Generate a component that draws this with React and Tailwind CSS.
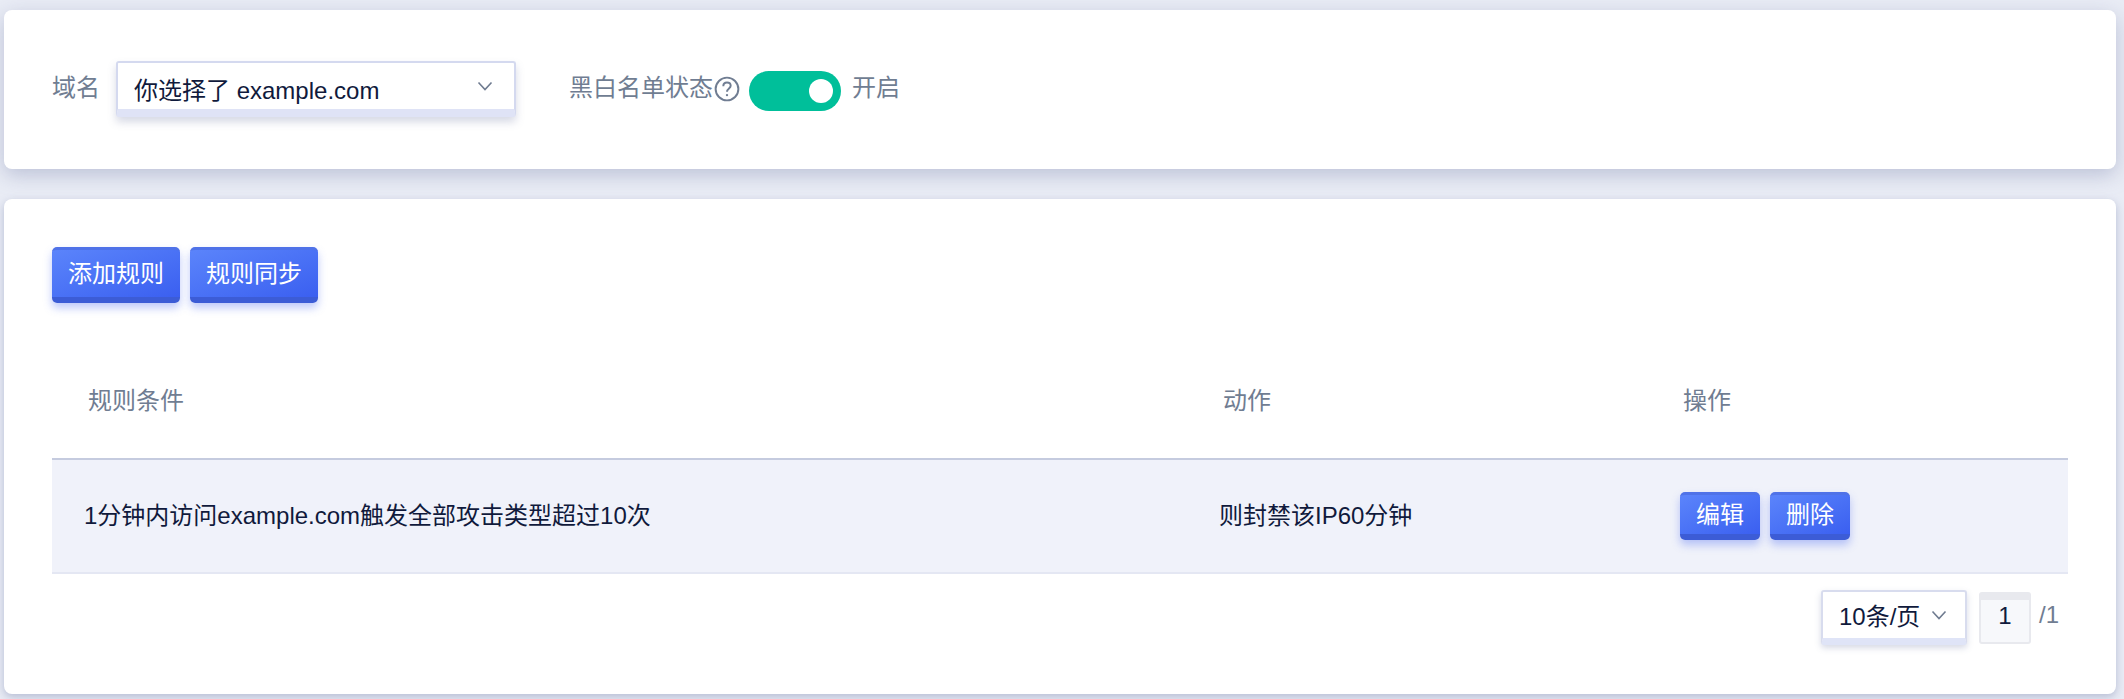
import React from 'react';

const font = { fontFamily: '"Liberation Sans", "Noto Sans CJK SC", sans-serif' };

function Chevron({ className }) {
    return (
        <svg viewBox="0 0 16 10" fill="none" stroke="currentColor" strokeWidth="1.6" className={className}>
            <path d="M1.5 1.5 L8 8.5 L14.5 1.5" />
        </svg>
    );
}

function BlueButton({ label, className }) {
    return (
        <button className={`flex items-center justify-center rounded-[5px] border-t-[3px] border-b-[6px] border-t-[#4f72e8] border-b-[#3c5cd6] bg-gradient-to-br from-[#5b84fb] to-[#3b5ff0] pt-[1px] text-[24px] leading-none text-white shadow-[0_5px_9px_rgba(70,100,240,0.35)] ${className}`}>
            {label}
        </button>
    );
}

export default function App() {
    return (
        <div style={font} className="h-[699px] overflow-hidden bg-[#e9ecf5] pt-[10px] pr-[8px] pl-[4px]">
            {/* filter card */}
            <div className="flex h-[159px] items-start rounded-[8px] bg-white pt-[51px] pl-[48px] shadow-[0_6px_20px_rgba(120,130,170,0.4)]">
                <span className="mt-[10px] text-[24px] leading-[34px] text-[#707d92]">域名</span>
                <div className="ml-[16px] flex h-[56px] w-[400px] items-center justify-between rounded-[3px] border-2 border-b-[8px] border-[#d4d9ef] border-b-[#dfe3f6] bg-white pr-[21px] pl-[16px] shadow-[0_5px_8px_rgba(120,130,170,0.3)]">
                    <span className="mt-[9px] text-[24px] leading-none text-[#101a3c]">你选择了 example.com</span>
                    <Chevron className="h-[10px] w-[16px] text-[#6f7b90]" />
                </div>
                <span className="ml-[53px] mt-[10px] text-[24px] leading-[34px] text-[#707d92]">黑白名单状态</span>
                <svg viewBox="0 0 24 24" fill="none" className="mt-[15px] ml-[1px] h-[26px] w-[26px] text-[#707d92]">
                    <circle cx="12" cy="12" r="10.5" stroke="currentColor" strokeWidth="1.8" />
                    <path d="M8.6 9.4 C8.6 7.2 10.2 6 12 6 C13.9 6 15.4 7.3 15.4 9.1 C15.4 11.4 12 11.7 12 14.6" stroke="currentColor" strokeWidth="1.8" />
                    <circle cx="12" cy="17.6" r="1.1" fill="currentColor" />
                </svg>
                <div className="ml-[9px] mt-[10px] flex h-[40px] w-[92px] items-center justify-end rounded-full bg-[#00bf9a] pr-[8px]">
                    <div className="h-[24px] w-[24px] rounded-full bg-white" />
                </div>
                <span className="ml-[11px] mt-[10px] text-[24px] leading-[34px] text-[#707d92]">开启</span>
            </div>

            {/* rule list card */}
            <div className="mt-[30px] h-[495px] rounded-[8px] bg-white pt-[48px] pr-[48px] pl-[48px] shadow-[0_3px_8px_rgba(120,130,170,0.45)]">
                <div className="flex gap-[10px]">
                    <BlueButton label="添加规则" className="h-[56px] w-[128px]" />
                    <BlueButton label="规则同步" className="h-[56px] w-[128px]" />
                </div>

                <div className="mt-[34px] flex h-[123px] items-center border-b-[2px] border-[#c5cbdf] pt-[6px] text-[24px] text-[#707d92]">
                    <div className="w-[1171px] pl-[36px]">规则条件</div>
                    <div className="w-[460px]">动作</div>
                    <div>操作</div>
                </div>
                <div className="flex h-[114px] items-center border-b-[2px] border-[#e4e7f3] bg-[#f0f2fa] text-[24px] text-[#101a3c]">
                    <div className="w-[1167px] pl-[32px]">1分钟内访问example.com触发全部攻击类型超过10次</div>
                    <div className="w-[461px]">则封禁该IP60分钟</div>
                    <div className="flex gap-[10px]">
                        <BlueButton label="编辑" className="h-[48px] w-[80px]" />
                        <BlueButton label="删除" className="h-[48px] w-[80px]" />
                    </div>
                </div>

                <div className="mt-[16px] flex items-start justify-end pr-[9px]">
                    <div className="flex h-[55px] w-[146px] items-center justify-between rounded-[3px] border-2 border-b-[7px] border-[#d8dcee] border-b-[#dfe4f7] bg-white pr-[18px] pl-[16px] shadow-[0_3px_6px_rgba(120,130,170,0.3)]">
                        <span className="mt-[3px] text-[24px] leading-none text-[#101a3c]">10条/页</span>
                        <Chevron className="h-[10px] w-[16px] text-[#6f7b90]" />
                    </div>
                    <div className="mt-[2px] ml-[12px] flex h-[52px] w-[52px] justify-center rounded-[3px] border-2 border-t-[8px] border-[#e8e9ee] bg-[#f7f8fb] text-[24px] leading-[32px] text-[#101a3c]">1</div>
                    <span className="mt-[12px] ml-[8px] text-[24px] leading-[26px] text-[#707d92]">/1</span>
                </div>
            </div>
        </div>
    );
}
